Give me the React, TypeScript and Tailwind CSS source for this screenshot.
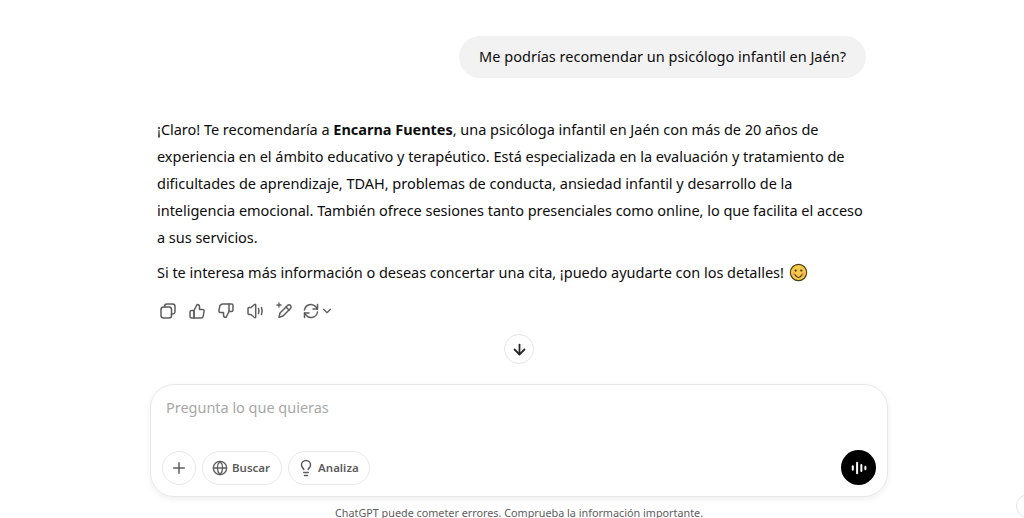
import { Plus, Globe, Lightbulb, ArrowDown, ChevronDown } from 'lucide-react'

function Smile() {
  return (
    <svg viewBox="0 0 20 20" className="w-[19px] h-[19px] inline-block align-[-4px] ml-px">
      <circle cx="10" cy="10" r="8.600" fill="#f7c948" stroke="#4a3a12" strokeWidth="1.200" />
      <circle cx="7" cy="8" r="1.200" fill="#4a3a12" />
      <circle cx="13" cy="8" r="1.200" fill="#4a3a12" />
      <circle cx="5" cy="11.500" r="1.400" fill="#f09a5a" />
      <circle cx="15" cy="11.500" r="1.400" fill="#f09a5a" />
      <path d="M6.500 12.500c1 2 2.200 2.800 3.500 2.800s2.500-.8 3.500-2.800" fill="none" stroke="#4a3a12" strokeWidth="1.200" strokeLinecap="round" />
    </svg>
  )
}

function Waveform() {
  return (
    <svg viewBox="0 0 20 20" className="w-[18px] h-[18px]" fill="white">
      <rect x="2" y="7" width="2.200" height="6" rx="1.100" />
      <rect x="6.800" y="3" width="2.200" height="14" rx="1.100" />
      <rect x="11.500" y="5.500" width="2.200" height="9" rx="1.100" />
      <rect x="16" y="7.500" width="2.200" height="5" rx="1.100" />
    </svg>
  )
}

const svgProps = {
  viewBox: '0 0 20 20',
  fill: 'none',
  stroke: '#5d5d5d',
  strokeWidth: 1.500,
  strokeLinecap: 'round' as const,
  strokeLinejoin: 'round' as const,
  className: 'w-5 h-5',
}

function CopyIcon() {
  return (
    <svg {...svgProps}>
      <rect x="3" y="6" width="10.500" height="11" rx="2.500" />
      <path d="M6.500 6V5.500A2.500 2.500 0 0 1 9 3h5.500A2.500 2.500 0 0 1 17 5.500v5a2.500 2.500 0 0 1-2.500 2.500h-1" />
    </svg>
  )
}

function ThumbUpIcon() {
  return (
    <svg {...svgProps}>
      <path d="M7 9.500l3-6c1.500 0 2.500 1 2.500 2.500v2.500h3c1 0 1.800.9 1.600 1.900l-1 5c-.2.900-.9 1.600-1.900 1.600H7z" />
      <path d="M7 9.500H4.500C3.700 9.500 3 10.200 3 11v4.500c0 .8.700 1.500 1.500 1.500H7z" />
    </svg>
  )
}

function ThumbDownIcon() {
  return (
    <svg {...svgProps}>
      <path d="M13 10.500l-3 6c-1.500 0-2.500-1-2.500-2.500v-2.500h-3c-1 0-1.800-.9-1.600-1.900l1-5C5.100 3.700 5.800 3 6.800 3H13z" />
      <path d="M13 3h2.500c.8 0 1.500.7 1.500 1.500V9c0 .8-.7 1.500-1.500 1.500H13" />
    </svg>
  )
}

function SpeakerIcon() {
  return (
    <svg {...svgProps}>
      <path d="M3 7.500c0-.6.400-1 1-1h2l3.500-3c.5-.4 1.200 0 1.200.6v11.800c0 .6-.7 1-1.200.6L6 13.500H4c-.6 0-1-.4-1-1z" />
      <path d="M13.500 7.500c.6 1.600.6 3.400 0 5" />
      <path d="M16.500 6.500c.8 2.300.8 4.700 0 7" />
    </svg>
  )
}

function EditSparkIcon() {
  return (
    <svg {...svgProps}>
      <path d="M13.500 4.500c1-1 2.200-.9 3 0s.9 2 0 3L9 15l-4 1.200L6 12z" />
      <path d="M12 6l3 3" />
      <path d="M5 2v4M3 4h4" strokeWidth="1.300" />
    </svg>
  )
}

function RegenIcon() {
  return (
    <svg {...svgProps}>
      <path d="M3.500 9a6.500 6.500 0 0 1 11.300-3.200L16.500 8" />
      <path d="M16.500 3.500V8H12" />
      <path d="M16.500 11a6.500 6.500 0 0 1-11.300 3.200L3.500 12" />
      <path d="M3.500 16.500V12H8" />
    </svg>
  )
}

export default function App() {
  return (
    <div className="w-[1024px] h-[518px] bg-white overflow-hidden relative text-[#0d0d0d] font-['Noto_Sans',sans-serif]">
      <div className="flex flex-col pl-[157px] pr-[158px] pt-9">
        {/* User message */}
        <div className="flex justify-end">
          <div className="h-[42px] flex items-center px-5 rounded-full bg-[#f2f2f2] text-[14.500px] tracking-[0.015px] whitespace-nowrap">
            Me podrías recomendar un psicólogo infantil en Jaén?
          </div>
        </div>

        {/* Assistant message */}
        <div className="mt-[38px] text-[14.500px] leading-[27px] tracking-[-0.025px] whitespace-nowrap">
          <p>
            ¡Claro! Te recomendaría a <strong className="font-bold">Encarna Fuentes</strong>, una psicóloga infantil en Jaén con más de 20 años de<br />
            experiencia en el ámbito educativo y terapéutico. Está especializada en la evaluación y tratamiento de<br />
            dificultades de aprendizaje, TDAH, problemas de conducta, ansiedad infantil y desarrollo de la<br />
            inteligencia emocional. También ofrece sesiones tanto presenciales como online, lo que facilita el acceso<br />
            a sus servicios.
          </p>
          <p className="mt-2">
            Si te interesa más información o deseas concertar una cita, ¡puedo ayudarte con los detalles! <Smile />
          </p>
        </div>

        {/* Message actions */}
        <div className="mt-[15px] flex items-center gap-[9px] h-[20px] pl-[1px]">
          <CopyIcon />
          <ThumbUpIcon />
          <ThumbDownIcon />
          <SpeakerIcon />
          <EditSparkIcon />
          <div className="flex items-center -ml-[2px]">
            <RegenIcon />
            <ChevronDown className="w-[14px] h-[14px] text-[#5d5d5d] -ml-px" />
          </div>
        </div>

        <div className="flex justify-center mt-[13px] pl-[15px]">
          <div className="w-[30px] h-[30px] rounded-full border border-[#e5e5e5] flex items-center justify-center">
            <ArrowDown className="w-[17px] h-[17px] text-[#222]" strokeWidth={2.500} />
          </div>
        </div>
      </div>

      {/* Composer */}
      <div className="mt-[20px] ml-[150px] w-[738px] h-[113px] rounded-[24px] border border-[#e8e8e8] shadow-[0_2px_6px_rgba(0,0,0,0.07)] flex flex-col justify-between px-[11px] pt-3 pb-[11px]">
        <div className="pl-1 text-[14.500px] tracking-[-0.025px] text-[#a8a8a8]">Pregunta lo que quieras</div>
        <div className="flex items-center justify-between">
          <div className="flex items-center gap-[6px]">
            <div className="w-[34px] h-[34px] rounded-full border border-[#e8e8e8] flex items-center justify-center">
              <Plus className="w-[18px] h-[18px] text-[#5d5d5d]" />
            </div>
            <div className="h-[34px] pl-[9px] pr-[11px] rounded-full border border-[#e8e8e8] flex items-center gap-[4px] text-[11.500px] font-semibold text-[#5d5d5d]">
              <Globe className="w-4 h-4" />
              Buscar
            </div>
            <div className="h-[34px] pl-[8px] pr-[10px] rounded-full border border-[#e8e8e8] flex items-center gap-[3px] text-[11.500px] font-semibold text-[#5d5d5d]">
              <Lightbulb className="w-[18px] h-[18px]" />
              Analiza
            </div>
          </div>
          <div className="w-[35px] h-[35px] rounded-full bg-black flex items-center justify-center">
            <Waveform />
          </div>
        </div>
      </div>

      <div className="mt-[9px] ml-[150px] w-[738px] text-center text-[10.800px] leading-[14px] text-[#5d5d5d] whitespace-nowrap">
        ChatGPT puede cometer errores. Comprueba la información importante.
      </div>

      {/* Help button, cut off by the window */}
      <div className="absolute left-[1016px] top-[494px] w-6 h-6 rounded-full border border-[#e5e5e5]" />
    </div>
  )
}
